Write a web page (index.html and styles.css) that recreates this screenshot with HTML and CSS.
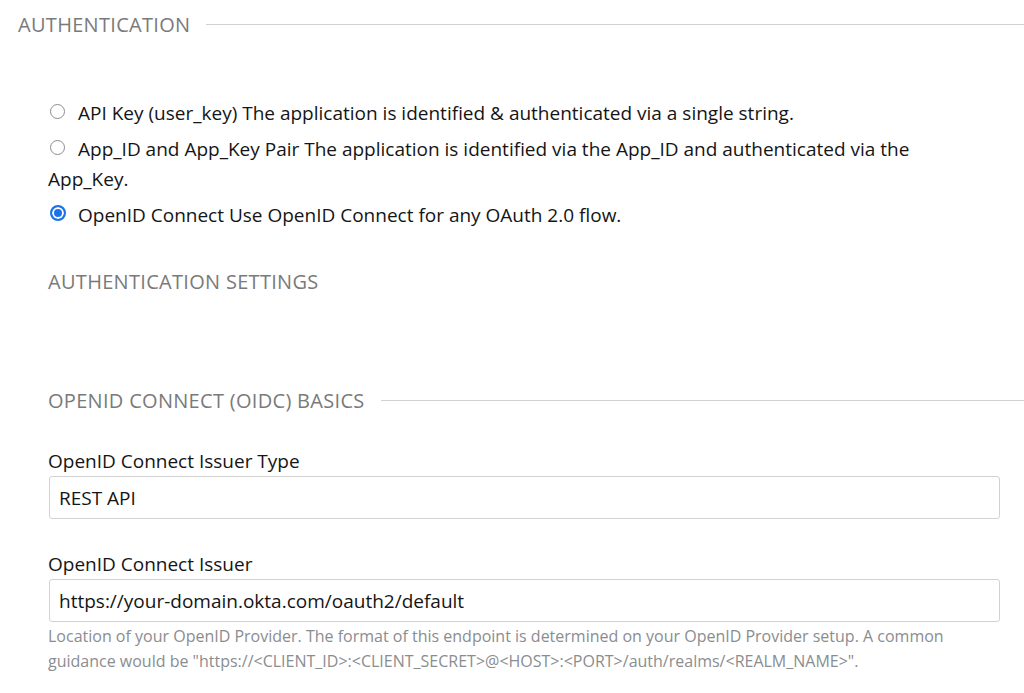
FILE: index.html
```html
<!DOCTYPE html>
<html lang="en">
<head>
<meta charset="utf-8">
<title>Authentication</title>
<link rel="stylesheet" href="styles.css">
</head>
<body>
<div class="page">
  <div class="legend-row top">
    <span class="legend">Authentication</span>
    <span class="rule"></span>
  </div>
  <div class="content">
    <ul class="radios">
      <li class="radio-item"><span class="radio"></span>API Key (user_key) The application is identified &amp; authenticated via a single string.</li>
      <li class="radio-item"><span class="radio"></span>App_ID and App_Key Pair The application is identified via the App_ID and authenticated via the App_Key.</li>
      <li class="radio-item"><span class="radio checked"></span>OpenID Connect Use OpenID Connect for any OAuth 2.0 flow.</li>
    </ul>
    <div class="subhead">Authentication Settings</div>
    <div class="legend-row basics">
      <span class="legend">OpenID Connect (OIDC) Basics</span>
      <span class="rule"></span>
    </div>
    <div class="field">
      <label class="label">OpenID Connect Issuer Type</label>
      <div class="input">REST API</div>
    </div>
    <div class="field second">
      <label class="label">OpenID Connect Issuer</label>
      <div class="input">https://your-domain.okta.com/oauth2/default</div>
      <p class="help">Location of your OpenID Provider. The format of this endpoint is determined on your OpenID Provider setup. A common guidance would be "https://&lt;CLIENT_ID&gt;:&lt;CLIENT_SECRET&gt;@&lt;HOST&gt;:&lt;PORT&gt;/auth/realms/&lt;REALM_NAME&gt;".</p>
    </div>
  </div>
</div>
</body>
</html>
```
FILE: styles.css
```css
html, body {
  margin: 0;
  padding: 0;
  background: #ffffff;
  overflow: hidden;
}
body {
  font-family: "Open Sans", "Liberation Sans", sans-serif;
  font-size: 19px;
  color: #151515;
}
.page {
  width: 1024px;
  height: 693px;
}
.legend-row {
  display: flex;
  align-items: center;
  gap: 16px;
}
.legend-row.top {
  padding: 11px 0 0 18px;
  height: 26px;
}
.legend {
  text-transform: uppercase;
  color: #7a7a7a;
  font-size: 20px;
  letter-spacing: 0.3px;
  white-space: nowrap;
}
.rule {
  flex: 1;
  height: 1px;
  background: #d2d2d2;
}
.content {
  padding: 0 24px 0 48px;
}
.radios {
  list-style: none;
  margin: 61px 0 0;
  padding: 0;
  max-width: 920px;
}
.radio-item {
  line-height: 30px;
  margin-bottom: 6px;
}
.radio {
  display: inline-block;
  width: 15px;
  height: 15px;
  border: 1px solid #8a8d90;
  border-radius: 50%;
  box-sizing: border-box;
  margin: 0 13px 0 2px;
  vertical-align: 1px;
}
.radio.checked {
  border: 2px solid #1a73e8;
  background: #1a73e8;
  box-shadow: inset 0 0 0 2px #ffffff;
  width: 16px;
  height: 16px;
  margin: 0 12px 0 2px;
}
.subhead {
  margin-top: 37px;
  text-transform: uppercase;
  color: #7a7a7a;
  font-size: 20px;
  letter-spacing: 0.3px;
  line-height: 30px;
}
.legend-row.basics {
  margin: 90px -24px 0 0;
  height: 26px;
}
.field {
  margin-top: 34px;
}
.field.second {
  margin-top: 31px;
}
.label {
  display: block;
  line-height: 28px;
  margin-bottom: 1px;
}
.input {
  margin-left: 1px;
  height: 43px;
  border: 1px solid #d2d2d2;
  border-radius: 3px;
  box-sizing: border-box;
  padding: 0 9px;
  display: flex;
  align-items: center;
}
.help {
  margin: 2px 0 0;
  font-size: 16px;
  line-height: 25px;
  color: #8a8d90;
}
```
